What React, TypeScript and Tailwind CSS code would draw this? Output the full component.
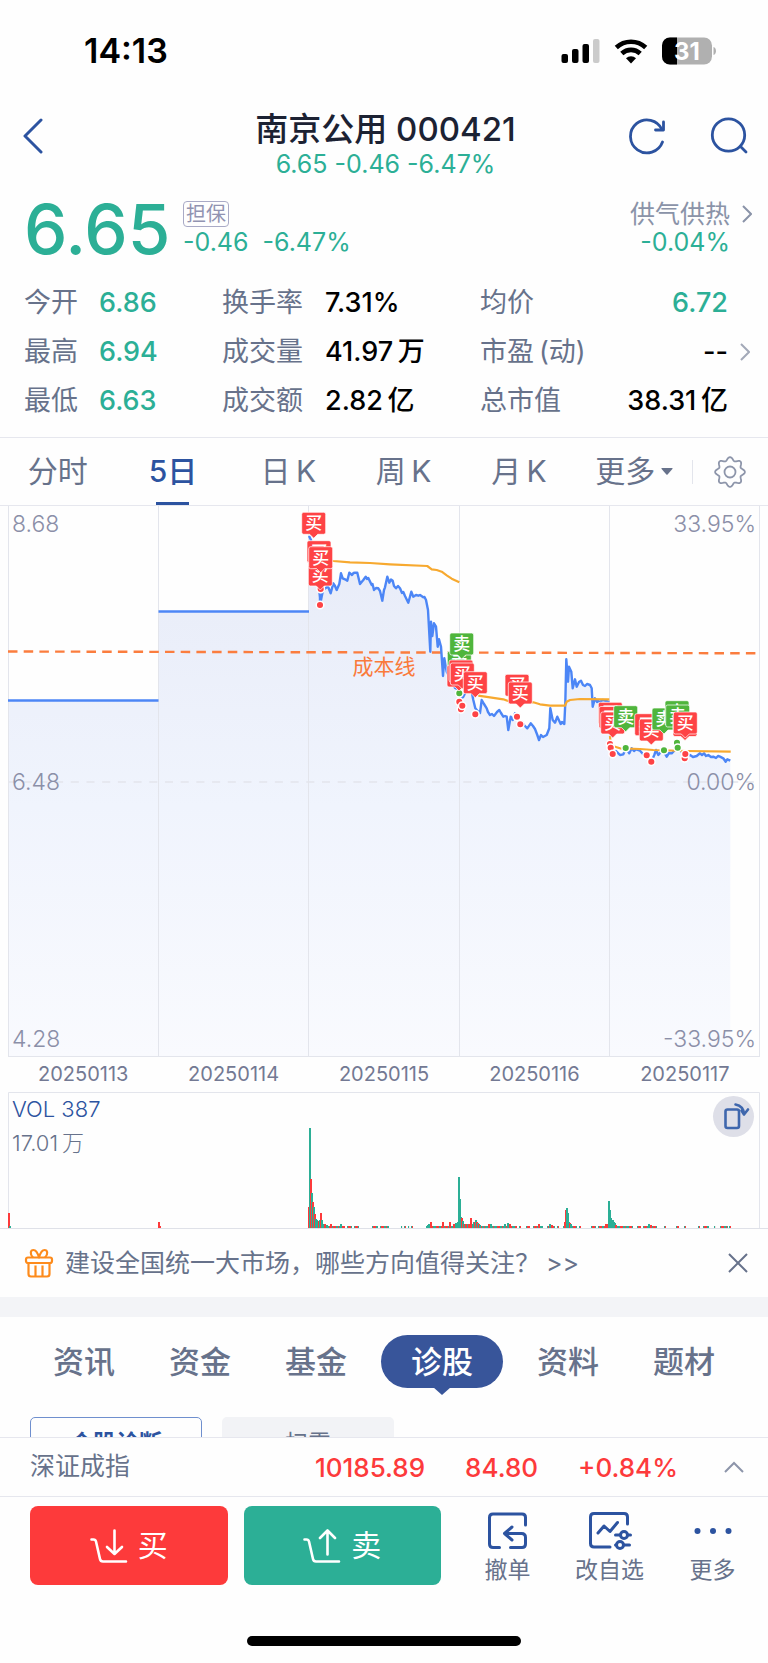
import type { ReactNode } from "react";

const RED = "#fe4345";
const GREEN = "#4fb53c";
const UP = "#fd3a3b";
const DOWN = "#2caf96";

const stats = [
  ["今开", "6.86", "换手率", "7.31%", "均价", "6.72"],
  ["最高", "6.94", "成交量", "41.97\u2009万", "市盈\u2009(动)", "--"],
  ["最低", "6.63", "成交额", "2.82\u2009亿", "总市值", "38.31\u2009亿"],
];

const periods = ["分时", "5日", "日\u2009K", "周\u2009K", "月\u2009K", "更多"];
const sections = ["资讯", "资金", "基金", "诊股", "资料", "题材"];
const dates = ["20250113", "20250114", "20250115", "20250116", "20250117"];
const gridX = [8.5, 158.5, 308.5, 459.5, 609.5, 759.5];

const day3 =
  "309,30 311,34 313,60 318,72 320,92 320,99 323,84 326.7,81.3 328.3,81.3 330.7,87.3 333.3,77.3 335,80 336.7,84 339.3,78 341,67.3 342.7,72.3 345,73.3 347.3,74.7 349.3,66.7 352,69 353.5,67 355,66.7 357.3,66.7 360,78 363.3,74 365.7,70.7 367,73 368.3,72 371.7,79 372.5,78 374,84 376,82 378.3,82.3 380,85 382.3,94.7 384,84 385,81.3 387.3,70.7 389.3,76.7 391,73.5 392.7,74.7 394,80 396,82.3 398,80 400,82.3 402,87 403.3,86 405,90 408.3,96.7 411.3,85.7 413.3,90.7 416,89 418.3,89.7 420,89 423.3,91.3 424.5,91 426,94 428,104 430.3,145.7 431,115.7 432.3,130 434,117.3 436,120.7 437.7,140.7 439,133.3 441,140.7 443,170 444.3,152.3 446.7,165.7 450,172 455,182 459.3,184";
const day4 =
  "459.3,194 463.3,190.7 468.3,180.7 471.7,185.7 473.3,194 475.3,202.3 478.3,205.7 480,207 481.7,194 484,198 486.7,202.3 488,206 490,209 492,208 494,210 497,206 499.3,204 501,207 503.3,210.7 505,210 506.7,210.7 508.3,224 510.7,210.7 512.7,214 515,207.3 517.3,212.3 520,217.3 522,216 524,219 527.3,222.3 530.7,217.3 533,220 535,223 537.3,229 539,234 541,229 543,231 546.7,229 549.3,222.3 550.3,202.3 552.7,214 555,216.7 557.3,210.7 560.7,218 562,216 564.3,218 565.3,197.3 566.3,153.3 568,175.7 569,160.7 571.3,165.7 572.7,182.3 575,173.3 576.7,180.7 579,176 581,174.7 583,179 585,180 587,178 590,179 591.7,182.3 592.7,200.7 595,192.3 597,196 598.3,195 600,196 602.7,194 608.3,195.7 609.5,196";
const day5 =
  "610,242 613.3,247.3 616,245 618.3,247.3 620,249 623.3,248.3 626,242.3 629.3,247.3 631.7,242.3 634,245 636,243.3 640,244.7 643,248 646,249 651.3,255.7 654.3,249 656,244 658.3,249 660,247 663.3,244.7 666.7,250.7 669,247 671.7,247.3 674,245 676.7,242.3 681.7,245.7 685,249 690,249 693,251 696.7,250 700,247.3 702,249 704,247.3 706,250 708.3,249 711,251 713.3,250.7 716,252 718,250 720,250.7 723.3,252.3 725.7,255.7 727.3,253.3 730.3,254.7";

const averages = [
  "312,52 333.3,55 350,56.3 370,57 390,58.3 427.3,60 431.7,63.3 436.7,64 441.7,65.7 446.7,69.3 451.7,72.7 459.3,76.3",
  "478.3,189.7 490,191.3 503.3,193.3 510,195.7 533.3,196.3 540,198.3 550,199.7 565,199.7 566.7,195.7 570,194 580,193 609.3,193.3",
  "610,230 611,242 615,240.7 620,242.3 640,243 653.3,244 686.7,245 730.7,245.7",
];

type Mark = [x: number, y: number, side: "买" | "卖"];

const flags: Mark[] = [
  [313.7, 17.3, "买"],
  [319, 45.7, "买"],
  [320.3, 69, "买"],
  [320.7, 51.7, "买"],
  [459.3, 156.3, "卖"],
  [461.7, 138, "卖"],
  [459, 170, "买"],
  [461, 165, "买"],
  [462.3, 168, "买"],
  [475.3, 176.7, "买"],
  [517, 179.3, "买"],
  [520.3, 187, "买"],
  [610.3, 207.3, "买"],
  [611, 211.5, "买"],
  [612.7, 217, "买"],
  [625.7, 210.7, "卖"],
  [646.7, 218.7, "买"],
  [651.3, 224, "买"],
  [664, 213, "卖"],
  [677, 205.7, "卖"],
  [677.7, 210, "卖"],
  [685, 219.5, "买"],
  [685.3, 217, "买"],
];

const dots: Mark[] = [
  [320.7, 83, "买"],
  [320, 99, "买"],
  [459.3, 187.3, "卖"],
  [459.3, 195.7, "买"],
  [461, 203.3, "买"],
  [462.3, 199.7, "买"],
  [475.3, 208.3, "买"],
  [517, 210.7, "买"],
  [520.3, 218.3, "买"],
  [610, 238, "买"],
  [610.7, 241.7, "买"],
  [612.7, 248, "买"],
  [625.7, 242, "卖"],
  [646.7, 249.3, "买"],
  [651.3, 255.7, "买"],
  [664, 244.3, "卖"],
  [677, 236.7, "卖"],
  [677.7, 241.7, "卖"],
  [684.7, 252.3, "买"],
  [685.3, 248, "买"],
];

// x, height, colour
const bars: [number, number, string][] = [
  [8, 15, UP], [9, 2, DOWN], [158, 6, UP], [159, 2, UP],
  [308, 21, UP], [309, 100, DOWN], [310, 49, UP], [311, 35, DOWN], [312, 26, UP],
  [313, 21, DOWN], [314, 14, UP], [315, 9, DOWN], [316, 8, DOWN], [317, 6, DOWN],
  [318, 7, UP], [319, 8, DOWN], [320, 15, UP], [321, 8, DOWN], [322, 4, DOWN],
  [324, 4, UP], [326, 3, DOWN], [330, 4, UP], [340, 4, DOWN],
  [427, 3, DOWN], [428, 4, DOWN], [430, 6, UP], [442, 6, UP], [449, 6, UP],
  [453, 4, UP], [455, 5, DOWN], [457, 6, DOWN], [458, 51, DOWN], [459, 29, DOWN],
  [460, 11, DOWN], [461, 10, UP], [462, 7, DOWN], [463, 4, UP], [464, 4, DOWN],
  [465, 4, UP], [466, 4, UP], [467, 4, DOWN], [468, 4, UP], [470, 10, UP],
  [472, 4, DOWN], [473, 6, DOWN], [474, 6, UP], [475, 8, DOWN], [476, 6, UP],
  [477, 5, DOWN], [478, 4, UP], [479, 3, DOWN], [488, 4, UP], [490, 4, DOWN],
  [504, 4, DOWN], [507, 5, DOWN], [509, 4, UP], [538, 4, UP], [549, 4, DOWN],
  [551, 3, UP], [564, 6, UP], [565, 18, UP], [566, 20, DOWN], [567, 15, DOWN],
  [568, 6, DOWN], [569, 5, UP], [570, 4, DOWN], [605, 4, UP], [607, 4, UP],
  [608, 27, DOWN], [609, 18, DOWN], [610, 10, DOWN], [611, 8, DOWN], [612, 8, DOWN],
  [613, 6, DOWN], [614, 5, DOWN], [615, 3, UP], [648, 4, DOWN], [650, 3, UP],
];

// stretches of minimal volume
const quiet: [number, number][] = [
  [323, 345], [347, 352], [354, 359], [372, 378], [380, 389], [401, 402], [404, 406],
  [408, 409], [411, 413], [426, 458], [460, 517], [519, 521], [526, 530], [533, 543],
  [547, 555], [557, 559], [563, 577], [579, 581], [591, 596], [598, 607], [610, 633],
  [637, 641], [643, 657], [664, 666], [676, 679], [684, 686], [698, 700], [703, 709],
  [714, 715], [720, 728], [729, 731],
];

// eight-lobed outline of the settings gear
const gear = Array.from({ length: 96 }, (_, i) => {
  const a = (i / 96) * Math.PI * 2;
  const r = 13.2 + 1.7 * Math.cos(8 * a);
  return `${(16 + r * Math.cos(a)).toFixed(2)},${(16 + r * Math.sin(a)).toFixed(2)}`;
}).join(" ");

function Chevron({ className }: { className: string }) {
  return (
    <svg viewBox="0 0 10 18" className={className} fill="none" stroke="currentColor" strokeWidth="2">
      <path d="M1 1l8 8-8 8" />
    </svg>
  );
}

function StatusBar() {
  return (
    <div className="flex h-[102px] items-center justify-between pr-[51px] pl-[84px] text-black">
      <span className="text-[34px] leading-9 font-semibold">14:13</span>
      <svg viewBox="0 0 156 28" className="h-7 w-[156px]">
        <rect x="0.5" y="17" width="6.5" height="9" rx="2" />
        <rect x="11" y="12" width="6.5" height="14" rx="2" />
        <rect x="21.5" y="7" width="6.5" height="19" rx="2" />
        <rect x="32" y="2" width="6.5" height="24" rx="2" fill="#cbcbcb" />
        <g fill="none" stroke="#000" strokeWidth="4.6">
          <path d="M55.300 10.500a21.500 21.500 0 0 1 29.400 0" />
          <path d="M60.800 16.500a13.500 13.500 0 0 1 18.400 0" />
        </g>
        <path d="M70 26.500l-5-5.300a7.400 7.400 0 0 1 10 0z" />
        <rect x="101" y="0.500" width="50" height="27" rx="8" fill="#b0b0b0" />
        <path d="M116 .5h-7a8 8 0 0 0-8 8v11a8 8 0 0 0 8 8h7z" />
        <path d="M152.500 10v8c3.300-1 3.300-7 0-8z" fill="#b0b0b0" />
        <text x="126" y="22.500" textAnchor="middle" fontSize="24" fontWeight="700" fill="#fff">
          31
        </text>
      </svg>
    </div>
  );
}

function Header() {
  return (
    <header className="flex items-start justify-between pt-[9px] pr-5 pl-[23px] text-[#2c53a0]">
      <div className="flex h-[50px] w-[120px] items-center">
        <button aria-label="返回">
          <svg viewBox="0 0 20 36" className="h-9 w-5" fill="none" stroke="currentColor" strokeWidth="3" strokeLinecap="round" strokeLinejoin="round">
            <path d="M18 2L2 18l16 16" />
          </svg>
        </button>
      </div>
      <div className="flex flex-col items-center gap-[3px]">
        <h1 className="text-[33px] leading-9 font-medium text-[#1c2233]">南京公用 000421</h1>
        <p className="text-[25px] leading-7 text-[#2caf96]">6.65 -0.46 -6.47%</p>
      </div>
      <div className="flex h-[50px] w-[120px] items-center justify-between">
        <button aria-label="刷新">
          <svg viewBox="0 0 38 38" className="size-[38px]" fill="none" stroke="currentColor" strokeWidth="2.8" strokeLinecap="round" strokeLinejoin="round">
            <path d="M34.500 25A16.500 16.500 0 1 1 34 12.500" />
            <path d="M35.500 5v8h-8" />
          </svg>
        </button>
        <button aria-label="搜索">
          <svg viewBox="0 0 38 38" className="size-[38px]" fill="none" stroke="currentColor" strokeWidth="2.8" strokeLinecap="round">
            <circle cx="18.500" cy="18" r="16.200" />
            <path d="M30.500 29.500l5.500 5.500" />
          </svg>
        </button>
      </div>
    </header>
  );
}

function Quote() {
  return (
    <section className="flex pt-[15px] pr-4 pl-6 text-[25px] leading-7 text-[#2caf96]">
      <span className="w-[159px] text-[69px] leading-[72px] font-medium">6.65</span>
      <div className="flex-1 pt-2">
        <div className="mb-px flex h-[26px]">
          <span className="rounded-[4px] border border-[#a9aac6] px-0.5 text-xl leading-6 text-[#9193b1]">担保</span>
        </div>
        <div className="flex gap-3.5">
          <span>-0.46</span>
          <span>-6.47%</span>
        </div>
      </div>
      <button className="flex gap-3 pt-2 text-right">
        <span>
          <span className="mb-px block h-[26px] leading-[26px] text-[#8a93a8]">供气供热</span>
          <span className="block">-0.04%</span>
        </span>
        <Chevron className="mt-1 h-[18px] w-2.5 text-[#8a93a8]" />
      </button>
    </section>
  );
}

function Stats() {
  return (
    <dl className="mt-[13px] text-[27px] leading-[49px] text-black">
      {stats.map(([a, av, b, bv, c, cv]) => (
        <div key={a} className="flex pr-4 pl-6">
          <dt className="w-[75px] text-[#67728b]">{a}</dt>
          <dd className="w-[123px] font-medium text-[#2caf96]">{av}</dd>
          <dt className="w-[103px] text-[#67728b]">{b}</dt>
          <dd className="w-[155px] font-medium whitespace-nowrap">{bv}</dd>
          <dt className="text-[#67728b]">{c}</dt>
          <dd className={cv === "6.72" ? "flex-1 text-right font-medium text-[#2caf96]" : "flex-1 text-right font-medium"}>{cv}</dd>
          <div className="flex w-6 items-center justify-end text-[#a3a9b8]">
            {cv === "--" && <Chevron className="mr-0.5 h-[18px] w-2.5" />}
          </div>
        </div>
      ))}
    </dl>
  );
}

function PeriodTabs() {
  return (
    <nav className="mt-3 flex h-[69px] border-y border-[#e6e7ee] text-[30px] text-[#67728b]">
      {periods.map((p) => (
        <button
          key={p}
          className={
            p === "5日"
              ? "relative flex flex-1 items-center justify-center font-medium text-[#2c53a0]"
              : "flex flex-1 items-center justify-center gap-1.5"
          }
        >
          {p}
          {p === "5日" && <span className="absolute bottom-0 h-[3px] w-[33px] bg-[#2c53a0]" />}
          {p === "更多" && (
            <svg viewBox="0 0 12 7" className="h-[7px] w-3" fill="currentColor">
              <path d="M1 0h10q1 0 .4.900L6.600 6.500q-.6.600-1.200 0L.600.900Q0 0 1 0z" />
            </svg>
          )}
        </button>
      ))}
      <div className="flex w-[76px] items-center">
        <span className="h-6 w-px bg-[#e3e5ec]" />
        <button aria-label="设置" className="mx-auto">
          <svg viewBox="0 0 32 32" className="size-8" fill="none" stroke="#8d95aa" strokeWidth="1.800" strokeLinejoin="round">
            <circle cx="16" cy="16" r="5.500" />
            <polygon points={gear} />
          </svg>
        </button>
      </div>
    </nav>
  );
}

function PriceChart() {
  return (
    <svg viewBox="0 0 768 551" className="block w-full">
      <defs>
        <linearGradient id="area" x1="0" y1="50" x2="0" y2="550" gradientUnits="userSpaceOnUse">
          <stop offset="0" stopColor="#e8ecf8" />
          <stop offset="0.500" stopColor="#f0f4fd" />
          <stop offset="1" stopColor="#f9fafe" />
        </linearGradient>
      </defs>
      <g fill="url(#area)">
        <path d="M8 194H158.500V550H8z" />
        <path d="M158.500 105H309V550H158.500z" />
        <polygon points={`309,550 ${day3} 459.300,550`} />
        <polygon points={`459.300,550 ${day4} 609.500,550`} />
        <polygon points={`609.500,550 ${day5} 730.300,550`} />
      </g>
      <g stroke="#e3e5ec">
        {gridX.map((x) => (
          <path key={x} d={`M${x} 0V550`} />
        ))}
        <path d="M8 550.500H760" />
        <path d="M8 276H760" strokeWidth="1.500" strokeDasharray="8 7.700" />
      </g>
      <path d="M8 145.500L760 147.300" stroke="#fb7d3e" strokeWidth="2.400" strokeDasharray="9.500 6.200" />
      <g fill="none" stroke="#4c86f6" strokeWidth="2.400" strokeLinejoin="round">
        <path d="M8 194.500H158.500" />
        <path d="M158.500 105.500H309" />
        <polyline points={day3} />
        <polyline points={day4} />
        <polyline points={day5} />
      </g>
      <g fill="none" stroke="#f7a92f" strokeWidth="2.200" strokeLinejoin="round">
        {averages.map((points) => (
          <polyline key={points} points={points} />
        ))}
      </g>
      <text x="384" y="168" textAnchor="middle" fontSize="21" fill="#fa7a3a">
        成本线
      </text>
      {dots.map(([x, y, side]) => (
        <circle key={`${x}-${y}`} cx={x} cy={y} r="3.800" fill={side === "买" ? RED : GREEN} stroke="#fff" strokeWidth="1.500" />
      ))}
      {flags.map(([x, y, side]) => (
        <g key={`${x}-${y}`} transform={`translate(${x} ${y})`}>
          <path
            d="M-10-11h20q2 0 2 2v18q0 2-2 2h-6l-4 4-4-4h-6q-2 0-2-2v-18q0-2 2-2z"
            fill={side === "买" ? RED : GREEN}
            stroke="#fff"
            strokeOpacity="0.700"
          />
          <text y="6" textAnchor="middle" fontSize="17" fontWeight="500" fill="#fff">
            {side}
          </text>
        </g>
      ))}
      <g fontSize="23" fontWeight="300" fill="#8b8fa8">
        <text x="12" y="26">8.68</text>
        <text x="12" y="284">6.48</text>
        <text x="12" y="541">4.28</text>
        <g textAnchor="end">
          <text x="756" y="26">33.95%</text>
          <text x="756" y="284">0.00%</text>
          <text x="756" y="541">-33.95%</text>
        </g>
      </g>
    </svg>
  );
}

function VolumeChart() {
  return (
    <div className="relative">
      <svg viewBox="0 0 768 138" className="block w-full">
        <path d="M8.500 137V1.500H759.500V137" fill="none" stroke="#e3e5ec" />
        {quiet.map(([from, to]) => (
          <g key={from}>
            <path d={`M${from} 136H${to}`} stroke={DOWN} strokeWidth="2" />
            <path d={`M${from + 1} 136H${to}`} stroke={UP} strokeWidth="2" strokeDasharray="3 2 1 3" />
          </g>
        ))}
        {bars.map(([x, h, color]) => (
          <rect key={x} x={x} y={137 - h} width="2" height={h} fill={color} />
        ))}
        <path d="M0 137.500H768" stroke="#dfe1e8" />
        <text x="12" y="26" fontSize="22" fontWeight="300" fill="#2c53a0">
          VOL 387
        </text>
        <text x="12" y="60" fontSize="22" fontWeight="300" fill="#67728b">
          {"17.01\u2009万"}
        </text>
      </svg>
      <button aria-label="横屏" className="absolute top-[5px] right-3.5 size-[41px] rounded-full bg-[#dedfe8]">
        <svg viewBox="0 0 41 41" className="size-[41px]" fill="none" stroke="#3f67ad" strokeWidth="2.600" strokeLinecap="round" strokeLinejoin="round">
          <rect x="12.500" y="13.500" width="13.500" height="18.500" rx="2" />
          <path d="M22.500 8.500q8 1.500 8.500 9.500M35 13.500L31 18.500l-2.500-4" />
        </svg>
      </button>
    </div>
  );
}

function Notice() {
  return (
    <div className="flex h-[68px] items-center pr-5 pl-6">
      <svg viewBox="0 0 30 30" className="mr-[11px] size-[30px]" fill="none" stroke="#fd8b1c" strokeWidth="2.200" strokeLinejoin="round">
        <path d="M9 9.500C5.500 6 6.500 2 9.500 2S14 6 15 9.500C16 6 17.500 2 20.500 2s4 4 .5 7.500" />
        <rect x="2" y="9.500" width="26" height="5.500" rx="2" />
        <path d="M4.500 15v11q0 2.500 2.500 2.500h16q2.500 0 2.500-2.500V15M11.500 17.500v11M18.500 17.500v11" />
      </svg>
      <a href="#" className="flex flex-1 gap-1.5 text-[25px] leading-9 text-[#67728b]">
        <span>建设全国统一大市场，哪些方向值得关注？</span>
        <span>&gt;&gt;</span>
      </a>
      <button aria-label="关闭">
        <svg viewBox="0 0 20 20" className="size-5" stroke="#67728b" strokeWidth="2">
          <path d="M1 1l18 18M19 1L1 19" />
        </svg>
      </button>
    </div>
  );
}

function SectionTabs() {
  return (
    <nav className="flex justify-between px-[53px] pt-[18px] text-[31px] leading-[53px] font-medium text-[#67728b]">
      {sections.map((s) =>
        s === "诊股" ? (
          <button key={s} className="relative -mx-5 w-[122px] rounded-full bg-[#38559a] text-white">
            {s}
            <svg viewBox="0 0 18 8" className="absolute top-full left-[52px] -mt-px h-2 w-[18px]" fill="#38559a">
              <path d="M0 0h18L9 8z" />
            </svg>
          </button>
        ) : (
          <button key={s}>{s}</button>
        ),
      )}
    </nav>
  );
}

function Cards() {
  return (
    <div className="mt-[29px] flex h-5 gap-5 overflow-hidden px-[30px] text-[23px] leading-[23px]">
      <button className="h-[52px] w-[172px] shrink-0 rounded-[5px] border border-[#6f8fce] font-semibold text-[#2c53a0]">个股诊断</button>
      <button className="h-[52px] w-[172px] shrink-0 rounded-[5px] bg-[#f2f3f6] text-[#67728b]">扫雷</button>
    </div>
  );
}

function IndexBar() {
  return (
    <div className="flex h-[60px] items-center border-y border-[#e6e7ee] pr-6 pl-[30px] text-[26px] text-[#fd3a3b]">
      <span className="flex-1 text-[25px] text-[#67728b]">深证成指</span>
      <span className="mr-10 font-medium">10185.89</span>
      <span className="mr-10 font-medium">84.80</span>
      <span className="font-medium">+0.84%</span>
      <button aria-label="展开" className="ml-[46px]">
        <svg viewBox="0 0 20 12" className="h-3 w-5" fill="none" stroke="#8d95aa" strokeWidth="2">
          <path d="M1 11l9-9 9 9" />
        </svg>
      </button>
    </div>
  );
}

function Action({ label, className, children }: { label: string; className: string; children: ReactNode }) {
  return (
    <button className={`flex flex-col items-center text-[23px] leading-7 text-[#67728b] ${className}`}>
      <svg viewBox="0 0 44 40" className="mb-1 h-10 w-11" fill="none" stroke="#2c53a0" strokeWidth="3" strokeLinecap="round" strokeLinejoin="round">
        {children}
      </svg>
      {label}
    </button>
  );
}

function TradeBar() {
  return (
    <div className="flex pt-[9px] pr-1 pl-[30px]">
      <button className="mr-4 flex h-[79px] flex-1 items-center justify-center gap-2.5 rounded-lg bg-[#fd3a3b] text-[30px] text-white">
        <svg viewBox="0 0 38 34" className="h-[34px] w-[38px]" fill="none" stroke="currentColor" strokeWidth="2.600" strokeLinecap="round" strokeLinejoin="round">
          <path d="M1.500 10.500h2q2 0 2.500 2l4 17.500q.5 2.500 3 2.500h23" />
          <path d="M24.500 1.500v23M17 18l7.500 7 7.500-7" />
        </svg>
        买
      </button>
      <button className="flex h-[79px] flex-1 items-center justify-center gap-2.5 rounded-lg bg-[#2caf96] text-[30px] text-white">
        <svg viewBox="0 0 38 34" className="h-[34px] w-[38px]" fill="none" stroke="currentColor" strokeWidth="2.600" strokeLinecap="round" strokeLinejoin="round">
          <path d="M1.500 10.500h2q2 0 2.500 2l4 17.500q.5 2.500 3 2.500h23" />
          <path d="M24.500 25.500v-23M17 9l7.500-7.500L32 9" />
        </svg>
        卖
      </button>
      <div className="flex w-[323px] pt-1.5 pl-4">
        <Action label="撤单" className="w-[101px]">
          <path d="M39.500 13V5.500q0-3.500-3.500-3.500H7Q3.500 2 3.500 5.500V32q0 3.500 3.500 3.500h6.500" />
          <path d="M24.500 35.500H36q3.500 0 3.500-3.500v-6.500q0-4-4-4h-17M26 15l-7.500 6.500L26 28" />
        </Action>
        <Action label="改自选" className="w-[103px]">
          <path d="M39.500 12V5Q39.500 1.500 36 1.500H6Q2.500 1.500 2.500 5v26.500q0 3.500 3.500 3.500h16" />
          <path d="M10 21l6-7 6 5.500 7.500-9M27.500 23h5M39.500 23h3M27.500 33h1M35.500 33h6" />
          <circle cx="36" cy="23" r="3.500" />
          <circle cx="32" cy="33" r="3.500" />
        </Action>
        <Action label="更多" className="w-[103px]">
          <g fill="#2c53a0" stroke="none">
            <circle cx="6.500" cy="19" r="3" />
            <circle cx="22" cy="19" r="3" />
            <circle cx="37.500" cy="19" r="3" />
          </g>
        </Action>
      </div>
    </div>
  );
}

export default function App() {
  return (
    <main className="bg-[#fefefe] font-['Inter','Noto_Sans_CJK_SC',sans-serif] leading-normal">
      <StatusBar />
      <Header />
      <Quote />
      <Stats />
      <PeriodTabs />
      <PriceChart />
      <div className="flex h-[34px] items-center px-2 text-center text-xl text-[#737993]">
        {dates.map((d) => (
          <span key={d} className="flex-1">
            {d}
          </span>
        ))}
      </div>
      <VolumeChart />
      <Notice />
      <div className="h-5 bg-[#f3f4f7]" />
      <SectionTabs />
      <Cards />
      <IndexBar />
      <TradeBar />
      <div className="pt-[51px] pb-[17px]">
        <div className="mx-auto h-2.5 w-[274px] rounded-full bg-black" />
      </div>
    </main>
  );
}
